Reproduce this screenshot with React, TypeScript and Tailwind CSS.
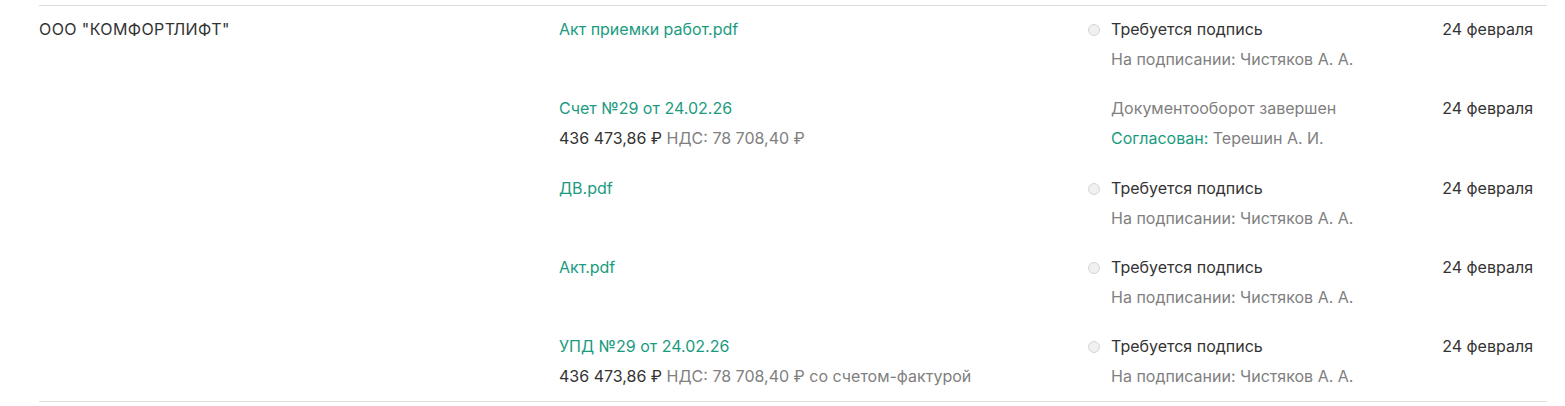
import React from "react";

type Row = {
  title: string;
  sum?: string;
  nds?: string;
  dot: boolean;
  status: string;
  statusGray?: boolean;
  sub: React.ReactNode;
};

const signing = <span className="text-[#808080]">На подписании: Чистяков А. А.</span>;

const rows: Row[] = [
  { title: "Акт приемки работ.pdf", dot: true, status: "Требуется подпись", sub: signing },
  {
    title: "Счет №29 от 24.02.26",
    sum: "436 473,86 ₽",
    nds: "НДС: 78 708,40 ₽",
    dot: false,
    status: "Документооборот завершен",
    statusGray: true,
    sub: (
      <span>
        <span className="text-[#1a9b80]">Согласован:</span>{" "}
        <span className="text-[#808080]">Терешин А. И.</span>
      </span>
    ),
  },
  { title: "ДВ.pdf", dot: true, status: "Требуется подпись", sub: signing },
  { title: "Акт.pdf", dot: true, status: "Требуется подпись", sub: signing },
  {
    title: "УПД №29 от 24.02.26",
    sum: "436 473,86 ₽",
    nds: "НДС: 78 708,40 ₽ со счетом-фактурой",
    dot: true,
    status: "Требуется подпись",
    sub: signing,
  },
];

export default function App() {
  return (
    <div
      className="bg-white w-[1565px] h-[406px] pt-[5px] text-[16px] leading-[30px] text-[#333333]"
      style={{ fontFamily: "Inter, 'Noto Sans', sans-serif" }}
    >
      <div className="ml-[39px] w-[1508px] border-t border-b border-[#dcdcdc] pt-[8px] pb-[10px] flex">
        <div className="w-[520px] shrink-0 tracking-[0.4px]">ООО "КОМФОРТЛИФТ"</div>
        <div className="flex-1 flex flex-col gap-[19.25px]">
          {rows.map((r, i) => (
            <div key={i} className="flex">
              <div className="w-[528px] shrink-0 flex flex-col">
                <div className="text-[#1a9b80]">{r.title}</div>
                {r.sum ? (
                  <div>
                    <span className="text-[#333333]">{r.sum}</span>{" "}
                    <span className="text-[#808080]">{r.nds}</span>
                  </div>
                ) : (
                  <div>&nbsp;</div>
                )}
              </div>
              <div className="flex-1 flex">
                <div className="w-[24px] shrink-0 flex items-start">
                  {r.dot && (
                    <span className="mt-[10px] ml-[1px] w-[12px] h-[12px] rounded-full bg-[#f0f0f0] border border-[#d6d6d6]" />
                  )}
                </div>
                <div className="flex-1 flex flex-col">
                  <div className={r.statusGray ? "text-[#808080]" : "text-[#333333]"}>{r.status}</div>
                  <div>{r.sub}</div>
                </div>
                <div className="pr-[14px] text-right">24 февраля</div>
              </div>
            </div>
          ))}
        </div>
      </div>
    </div>
  );
}
